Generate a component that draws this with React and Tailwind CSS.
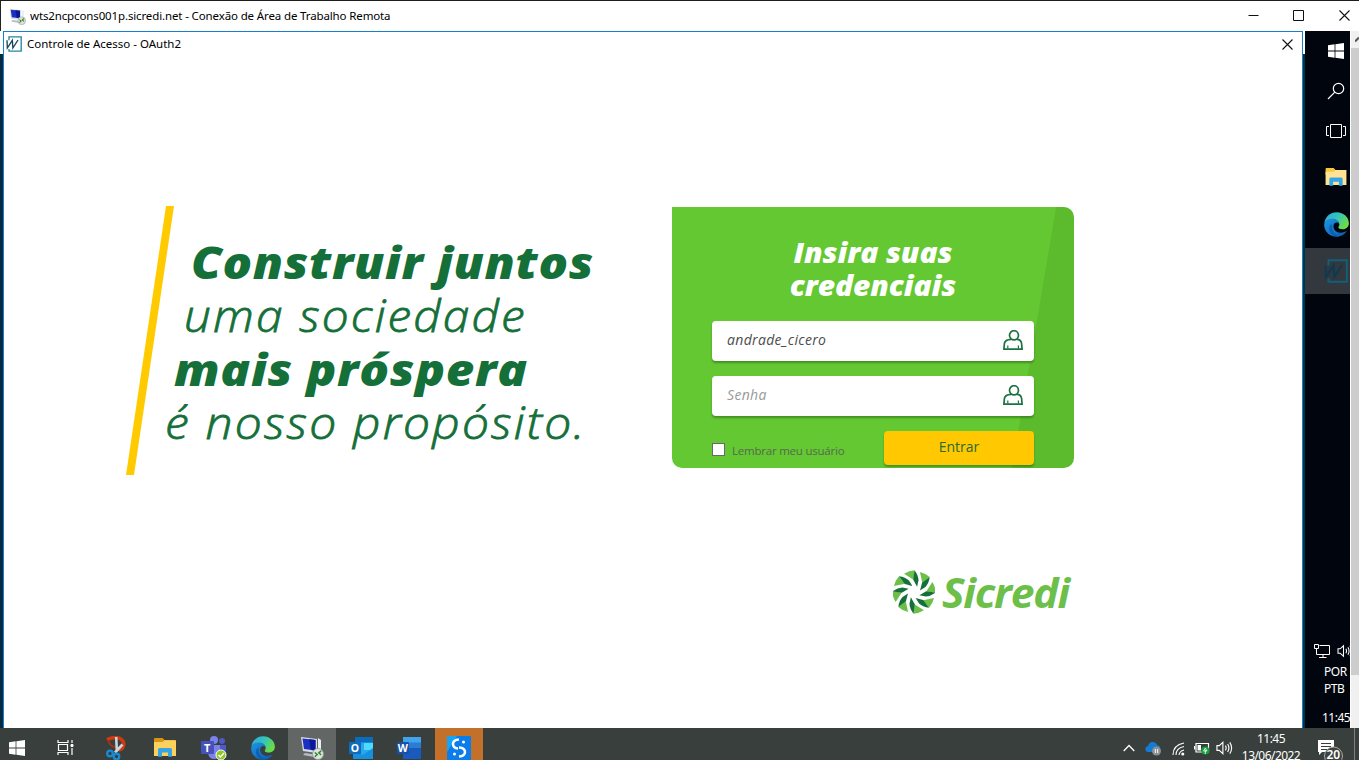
import React from "react";

const UI = "font-['Noto_Sans','Open_Sans',sans-serif]";
const EXO = "font-['Open_Sans','Noto_Sans',sans-serif]";

function WindowsLogo({ className }) {
  return (
    <svg className={className} viewBox="0 0 16 16" fill="#fff">
      <path d="M0 2.2 6.6 1.3V7.5H0zM7.4 1.2 16 0V7.5H7.4zM0 8.4H6.6V14.7L0 13.8zM7.4 8.4H16V16L7.4 14.8z" />
    </svg>
  );
}

function RemoteIcon({ className }) {
  return (
    <svg className={className} viewBox="0 0 24 24">
      <path d="M1 1 17 3V17L3 15z" fill="#d9dbe2" />
      <path d="M2.5 2.4 15.5 4V14.5L4 13z" fill="#1b2fc4" />
      <path d="M9 3.2 15.5 4V14.5L11 14z" fill="#0a1796" />
      <path d="M5 17 15 18.5 14 21 3 19z" fill="#b9bcc4" />
      <path d="M18 2 21 4V15L18 17z" fill="#eceef2" />
      <circle cx="18" cy="18" r="5.5" fill="#dfe3df" stroke="#8d928d" strokeWidth=".7" />
      <path d="m14.8 16.5 2.4 2-2.4 2.2M21.2 14.8l-2.4 2 2.4 2.2" fill="none" stroke="#2d8a30" strokeWidth="1.5" />
    </svg>
  );
}

function WIcon({ className, dim }) {
  const frame = dim ? "#126078" : "#2386a4";
  const ink = dim ? "#0c3b51" : "#164458";
  return (
    <svg className={className} viewBox="0 0 24 24" fill="none">
      <path d="M4.500 6.500V1.200H22.800V22.800H4.500V19.500" stroke={frame} strokeWidth="2" />
      <path d="M1.500 6.500 2 18 9.500 6.500 10.300 18 18 6" stroke={ink} strokeWidth="2" />
    </svg>
  );
}

function EdgeIcon({ className, id }) {
  return (
    <svg className={className} viewBox="0 0 24 24">
      <defs>
        <linearGradient id={id + "a"} x1="0" y1="0" x2="1" y2=".5">
          <stop offset="0" stopColor="#2aa5e6" />
          <stop offset=".55" stopColor="#35c5b8" />
          <stop offset="1" stopColor="#6bdc45" />
        </linearGradient>
        <linearGradient id={id + "b"} x1="0" y1="0" x2="1" y2="1">
          <stop offset="0" stopColor="#1c96e3" />
          <stop offset="1" stopColor="#0c58b0" />
        </linearGradient>
      </defs>
      <path d="M.3 11C1 4.500 6 .2 12 .2c7 0 11.900 5 11.900 10.600 0 3.400-2.500 5.800-5.900 5.800-2.800 0-4.300-.9-4.300-1.900 0-.7 1-1.100 1-2.800C14.700 9 11.500 7 8 7 4.300 7 1.500 8.500.3 11z" fill={"url(#" + id + "a)"} />
      <path d="M.2 11.500C1.300 8.500 4.300 6.500 8 6.500c3.800 0 6.500 2.300 6.500 5-.8-1.600-3-1.900-4.300-.7-2.500 2.400-.8 8.700 5.300 9 2.600.1 4.900-.8 6.500-1.800-2 3.600-5.800 5.800-10 5.800C5 23.800-.4 18 .2 11.500z" fill={"url(#" + id + "b)"} />
      <path d="M8 11.500c-1.500 5 1.500 10.500 6.500 12C8.500 24 4.500 19.500 5 15c.2-1.800 1.400-3 3-3.500z" fill="#0b4d9c" opacity=".55" />
    </svg>
  );
}

function FolderIcon({ className, pale }) {
  return (
    <svg className={className} viewBox="0 0 22 19">
      <path d="M0 1Q0 0 1 0H8.500L10.500 2H21V7H0z" fill={pale ? "#f7c936" : "#d89514"} />
      <path d="M0 4H8.500L10.500 2.200H22V18H0z" fill={pale ? "#ffe294" : "#fbd05c"} />
      <path d="M4 18.800V11.500Q4 10 5.500 10H16.500Q18 10 18 11.500V18.800H14V14.500H8V18.800z" fill="#36a5e6" />
    </svg>
  );
}

function UserIcon() {
  return (
    <svg className="-mt-[2px] h-5 w-5 shrink-0" viewBox="0 0 20 20" fill="none" stroke="#1a7340" strokeWidth="1.700">
      <ellipse cx="11" cy="5.300" rx="4.500" ry="4.600" />
      <path d="M8 9.400C4 9.600 1.900 10.800 1.400 13.500L.9 19.200H19.100L18.600 13.500C18.200 10.800 17 9.500 14 9.400" />
      <path d="M4.800 15.500V18.500M15.400 15.500V18.500" strokeWidth="1.200" />
    </svg>
  );
}

function SpeakerIcon({ className }) {
  return (
    <svg className={className} viewBox="0 0 18 16" fill="none" stroke="#fff" strokeWidth="1.200">
      <path d="M1 5.500H3.500L7.300 2V14L3.500 10.500H1z" />
      <path d="M10 5.500Q11.500 8 10 10.500M12.300 3.800Q15 8 12.300 12.200M14.600 2Q18.500 8 14.600 14" />
    </svg>
  );
}

function CloseIcon() {
  return (
    <svg className="h-[11px] w-[11px]" viewBox="0 0 11 11" stroke="#111" strokeWidth="1.100">
      <path d="M.5.5 10.500 10.500M10.500.5.5 10.500" />
    </svg>
  );
}

function TitleBar() {
  return (
    <header className="flex h-[30px] shrink-0 items-center border-l border-[#222] bg-white pl-2">
      <RemoteIcon className="h-[17px] w-[17px]" />
      <span className="ml-1 text-[11.500px] leading-none tracking-[-0.13px] whitespace-nowrap text-black">
        wts2ncpcons001p.sicredi.net - Conexão de Área de Trabalho Remota
      </span>
      <div className="-mt-[2px] ml-auto flex items-center pr-[9px]">
        <svg className="h-[11px] w-[11px]" viewBox="0 0 11 11"><path d="M.5 5.500H10.500" stroke="#111" /></svg>
        <svg className="ml-[34px] h-[11px] w-[11px]" viewBox="0 0 11 11"><path d="M.5.5H10.500V10.500H.5z" fill="none" stroke="#111" /></svg>
        <span className="ml-[35px]"><CloseIcon /></span>
      </div>
    </header>
  );
}

function Slogan() {
  return (
    <section className={`flex h-[269px] w-[480px] ${EXO} text-[#156f39] italic`}>
      <svg className="h-[269px] w-12 shrink-0" viewBox="0 0 48 269">
        <path d="M40 0H48L8 269H0z" fill="#ffcb00" />
      </svg>
      <div className="flex flex-col items-start pt-[30px] whitespace-nowrap">
        <div className="ml-[17px] h-[53px] origin-left scale-x-[1.11] text-[44px] leading-[53px] font-extrabold tracking-[0.6px]">Construir juntos</div>
        <div className="ml-[10px] h-[54px] origin-left scale-x-[1.085] text-[44px] leading-[53px] font-light tracking-[2px] [-webkit-text-stroke:0.8px_#156f39]">uma sociedade</div>
        <div className="h-[53px] origin-left scale-x-[1.12] text-[44px] leading-[53px] font-extrabold tracking-[0.600px]">mais próspera</div>
        <div className="-ml-[9px] h-[54px] origin-left scale-x-[1.09] text-[44px] leading-[53px] font-light tracking-[2px] [-webkit-text-stroke:0.8px_#156f39]">é nosso propósito.</div>
      </div>
    </section>
  );
}

function Field({ text, color }) {
  return (
    <div className="flex h-10 items-center justify-between rounded-[4px] bg-white pr-[11px] pl-[15px] shadow-[0_2px_2px_rgba(30,80,20,0.45)]">
      <span className={`-mt-[3px] text-[14px] font-medium ${color}`}>{text}</span>
      <UserIcon />
    </div>
  );
}

function LoginCard() {
  return (
    <form className={`h-[261px] w-[402px] overflow-hidden rounded-[10px] rounded-tl-none bg-[linear-gradient(99.600deg,#64c832_86%,#5cbb2c_86.200%)] px-10 ${EXO}`}>
      <h1 className="scale-x-[1.09] pt-[29px] text-center text-[27.500px] leading-[33px] font-extrabold tracking-[-0.1px] text-white italic">
        Insira suas
        <br />
        credenciais
      </h1>
      <div className="mt-[19px] flex flex-col gap-[15px]">
        <Field text="andrade_cicero" color="text-[#4d4d4d] italic tracking-[0.33px]" />
        <Field text="Senha" color="text-[#999] italic tracking-[0.33px]" />
      </div>
      <div className="mt-[15px] flex h-[34px] justify-between">
        <label className="flex items-center pt-1 text-[11.500px] tracking-[-0.22px] text-[#57684e]">
          <span className="-mt-px mr-[7px] h-[13px] w-[13px] border border-[#696969] bg-white" />
          <span className="pt-[2px]">Lembrar meu usuário</span>
        </label>
        <button type="button" className="h-[34px] w-[150px] rounded-[4px] bg-[#ffc800] pb-[3px] text-[14px] text-[#286b32] shadow-[0_2px_2px_rgba(30,80,20,0.45)]">
          Entrar
        </button>
      </div>
    </form>
  );
}

function SicrediLogo() {
  const petals = [0, 1, 2, 3, 4, 5, 6, 7];
  return (
    <div className={`flex h-[46px] w-[180px] items-center ${EXO}`}>
      <svg className="h-[46px] w-[42px] shrink-0" viewBox="-21.500 -23 43 46">
        {petals.map((n) => (
          <g key={n} transform={`rotate(${n * 45})`}>
            <path d="M-10.200-18.800Q-5-22 .5-22.200L-.5-12.500z" fill="#6cc04a" />
            <path d="M.5-22.200Q4.500-17 4.600-12L3.200-5.500-.8-12.500z" fill="#156f39" />
          </g>
        ))}
      </svg>
      <span className="ml-[7px] origin-left scale-x-[1.04] text-[41px] leading-none font-bold tracking-[-1.200px] text-[#6cc04a] italic">Sicredi</span>
    </div>
  );
}

function AccessWindow() {
  return (
    <main className="flex w-[1300px] shrink-0 flex-col border-x border-t border-[#1680d0] bg-white">
      <div className="flex h-[24px] items-center pr-[9px] pl-[2px]">
        <WIcon className="h-[16px] w-4" />
        <span className="ml-[5px] text-[11.500px] text-black">Controle de Acesso - OAuth2</span>
        <span className="ml-auto"><CloseIcon /></span>
      </div>
      <div className="flex pt-[150px] pl-[122px]">
        <Slogan />
        <div className="ml-[66px] flex flex-col pt-px">
          <LoginCard />
          <div className="mt-[101px] pl-[221px]"><SicrediLogo /></div>
        </div>
      </div>
    </main>
  );
}

function RemoteTaskbar() {
  return (
    <aside className="flex w-[45px] shrink-0 flex-col overflow-hidden bg-[#01050d]">
      <div className="flex h-10 items-center pl-[23px]"><WindowsLogo className="h-4 w-4" /></div>
      <div className="flex h-10 items-center pl-[22px]">
        <svg className="h-[18px] w-[18px]" viewBox="0 0 18 18" fill="none" stroke="#fff" strokeWidth="1.200">
          <circle cx="11.500" cy="6.500" r="5.200" /><path d="M7.800 10.200 1 17" />
        </svg>
      </div>
      <div className="flex h-10 items-center pl-[21px]">
        <svg className="h-[14px] w-5 shrink-0" viewBox="0 0 20 14" fill="none" stroke="#fff">
          <path d="M4.500.5H15.500V13.500H4.500zM3 2.500H.5V11.500H3M17 2.500H19.500V11.500H17" />
        </svg>
      </div>
      <div className="flex h-[50px] items-center pt-[2px] pl-5"><FolderIcon pale className="h-[18px] w-[22px]" /></div>
      <div className="flex h-[47px] items-center pl-[19px]"><EdgeIcon id="side" className="h-[25px] w-[25px]" /></div>
      <div className="flex h-[46px] shrink-0 items-center bg-[#33373e] pl-[19px]"><WIcon dim className="h-[24px] w-[24px]" /></div>
      <div className="mt-auto flex flex-col text-[12px] text-white">
        <div className="flex h-4 items-center gap-[7px] pl-[9px]">
          <svg className="h-[14px] w-4 shrink-0" viewBox="0 0 16 14" fill="none" stroke="#fff">
            <path d="M5.500 1.500H15.500V10.500H2.500V6M9 10.500V13M5 13.500H12.500M.5.500H4.500V4.500H.5zM2.500 4.500V7" />
          </svg>
          <SpeakerIcon className="h-[14px] w-4 shrink-0" />
        </div>
        <div className="mt-1 pl-[19px] leading-[17px] tracking-[-0.5px]">POR<br />PTB</div>
        <div className="mt-3 mb-[2px] pl-[17px] leading-[17px] tracking-[-0.5px]">11:45</div>
      </div>
    </aside>
  );
}

function ScrollBar() {
  return (
    <div className="flex w-[9px] shrink-0 flex-col border-l border-white bg-[#f0f0f0]">
      <div className="flex h-[17px] justify-end pt-1">
        <svg className="h-2 w-1" viewBox="0 0 4 8"><path d="M0 6.500 4 2.500" stroke="#555" strokeWidth="2" /></svg>
      </div>
      <div className="h-[627px] bg-[#cdcdcd]" />
    </div>
  );
}

function TeamsIcon() {
  return (
    <svg className="ml-1 h-6 w-[26px]" viewBox="0 0 26 24">
      <circle cx="13" cy="4" r="4" fill="#7b83eb" /><circle cx="21" cy="5" r="3" fill="#5059c9" />
      <path d="M16 9H25V16Q25 20 20 20H16z" fill="#5059c9" />
      <path d="M7 9H19V17Q18 23 13 23Q8 23 7 17z" fill="#7b83eb" />
      <rect x="0" y="5" width="13" height="13" rx="1" fill="#4651ba" />
      <text x="3" y="16" fontSize="11" fontWeight="700" fill="#fff">T</text>
      <circle cx="20" cy="19" r="5" fill="#8ec820" stroke="#fff" />
      <path d="m17.500 19 2 2 3.500-4" stroke="#fff" strokeWidth="1.500" fill="none" />
    </svg>
  );
}

function OfficeIcon({ letter, word }) {
  return (
    <svg className="h-[22px] w-6" viewBox="0 0 24 22">
      <rect x="6" y="0" width="18" height="22" rx="1" fill={word ? "#2b7cd3" : "#28a8ea"} />
      <path d="M6 0H24V5.500H6z" fill={word ? "#41a5ee" : "#0a6cbd"} />
      <path d={word ? "M6 11H24V22H6z" : "M15 6H24V13H15z"} fill={word ? "#185abd" : "#50d9ff"} />
      {!word && <path d="M4 13 14 18 24 11V22H4z" fill="#1490df" />}
      <rect x="0" y="5" width="12" height="12" rx="1" fill={word ? "#1651aa" : "#0f6cbd"} />
      <text x={word ? 0.8 : 1.8} y="15" fontSize="10.500" fontWeight="700" fill="#fff">{letter}</text>
    </svg>
  );
}

function Slot({ children, tone = "" }) {
  return <div className={`flex h-8 w-12 shrink-0 justify-center pt-2 ${tone}`}>{children}</div>;
}

function Taskbar() {
  return (
    <footer className="flex h-8 shrink-0 overflow-hidden bg-[#393f3c] text-white">
      <div className="flex w-[41px] shrink-0 pt-3 pl-[9px]"><WindowsLogo className="h-4 w-4" /></div>
      <Slot>
        <svg className="mt-1 h-[15px] w-[17px]" viewBox="0 0 17 15" fill="none" stroke="#fff">
          <path d="M1 0V2.500H11V0M1 15V12.500H11V15M1.500 4.500H10.500V10.500H1.500zM15 0V3M15 8V15" strokeWidth="1.200" />
          <path d="M14 4.500H16V6.500H14z" fill="#fff" />
        </svg>
      </Slot>
      <div className="w-[3px]" />
      <Slot tone="pl-[2px]">
        <svg className="h-6 w-[22px]" viewBox="0 0 22 24" fill="none">
          <path d="M1 3.500Q9 0 14 2.500Q19 5.500 17.500 10Q16.500 13.500 12.500 14" stroke="#cf3a13" strokeWidth="3.400" />
          <path d="M2.500 4Q3 10 9 11" stroke="#b02f10" strokeWidth="1.800" />
          <path d="M10.200 1 10.800 14M16.500 8.500 9 16.500" stroke="#cdd5da" strokeWidth="2.600" />
          <circle cx="4" cy="17.500" r="2.800" stroke="#168bd2" strokeWidth="2.300" /><circle cx="10.500" cy="20.500" r="2.800" stroke="#168bd2" strokeWidth="2.300" />
        </svg>
      </Slot>
      <Slot tone="pl-[2px]"><FolderIcon className="mt-[2px] h-[19px] w-[22px]" /></Slot>
      <Slot><TeamsIcon /></Slot>
      <Slot tone="pl-[5px]"><EdgeIcon id="bar" className="h-6 w-6" /></Slot>
      <div className="w-1" />
      <Slot tone="bg-[#626765]"><RemoteIcon className="h-6 w-6" /></Slot>
      <Slot tone="pl-[2px]"><span className="mt-px"><OfficeIcon letter="O" /></span></Slot>
      <Slot tone="pl-[2px]"><span className="mt-px"><OfficeIcon letter="W" word /></span></Slot>
      <div className="w-[3px]" />
      <Slot tone="bg-[#c2702a]">
        <svg className="h-6 w-6" viewBox="0 0 24 24" fill="none">
          <rect width="24" height="24" fill="#0a7cec" /><path d="M0 0H10L0 16z" fill="#16a5f5" />
          <path d="M12 3.500Q6 4 6 8T11 12.500M12 11.500Q18 12 18 16T12 20.500" stroke="#fff" strokeWidth="2.500" />
          <circle cx="16.500" cy="6" r="1.500" fill="#fff" /><circle cx="7.500" cy="18" r="1.500" fill="#fff" />
        </svg>
      </Slot>
      <div className="ml-auto flex pr-1">
        <svg className="mt-4 h-2 w-3" viewBox="0 0 12 8" fill="none" stroke="#fff" strokeWidth="1.300"><path d="M.7 7 6 1.500 11.300 7" /></svg>
        <svg className="mt-[13px] ml-[10px] h-[15px] w-4" viewBox="0 0 16 15">
          <path d="M1 10Q-1 6 3 5Q4 1 7.500 1Q11 1 12 4Q16 5 15 9L13 11H2z" fill="#167bd0" />
          <circle cx="11.500" cy="10" r="4.500" fill="#8b9096" /><path d="M10.300 8V12M12.700 8V12" stroke="#fff" />
        </svg>
        <svg className="mt-[14px] ml-[11px] h-[14px] w-[13px]" viewBox="0 0 13 14" fill="none" stroke="#fff" strokeWidth="1.100">
          <path d="M1 13Q1 3 12 1M4 13Q4 6 12 4.500M7 13Q7.500 9 12 8" /><circle cx="10.800" cy="12" r="1" fill="#fff" />
        </svg>
        <svg className="mt-[14px] ml-[9px] h-[13px] w-4" viewBox="0 0 16 13">
          <path d="M2 1.500H14.500V10H2zM.5 4V7.500" fill="none" stroke="#fff" strokeWidth="1.200" /><path d="M3.500 3H7V8.500H3.500z" fill="#fff" />
          <circle cx="11.300" cy="8.500" r="4" fill="#13a33b" /><path d="M11.300 6 13 9H9.600zM11.300 8V12" stroke="#fff" strokeWidth=".8" fill="none" />
        </svg>
        <SpeakerIcon className="mt-3 ml-[6px] h-4 w-[17px]" />
        <div className="ml-[7px] w-[62px] pt-[2px] text-center text-[12px] leading-[17px] tracking-[-0.55px]">
          <div>11:45</div>
          <div>13/06/2022</div>
        </div>
        <svg className="mt-3 ml-[16px] h-5 w-[27px]" viewBox="0 0 27 20">
          <path d="M0 0H16V12H4L1 15V12H0z" fill="#fff" /><path d="M3 3.500H13M3 6.500H13M3 9.500H13" stroke="#393f3c" />
          <circle cx="15.500" cy="16" r="9" fill="#3d423f" stroke="#a5a9a7" />
          <text x="8.500" y="19" fontSize="12" fontWeight="600" fill="#fff">20</text>
        </svg>
        <div className="ml-[9px] w-px bg-[#7c817e]" />
      </div>
    </footer>
  );
}

export default function App() {
  return (
    <div className="h-[760px] w-full overflow-hidden bg-white">
      <div className={`flex h-[760px] w-[1359px] flex-col overflow-hidden border-t border-[#1d1d1f] ${UI}`}>
        <TitleBar />
        <div className="flex h-[697px] shrink-0">
          <div className="w-[3px] shrink-0 bg-[linear-gradient(#fff_23px,#062a3e_23px)]" />
          <AccessWindow />
          <div className="w-[2px] shrink-0 bg-[linear-gradient(#fff_23px,#063247_23px)]" />
          <RemoteTaskbar />
          <ScrollBar />
        </div>
        <Taskbar />
      </div>
    </div>
  );
}
